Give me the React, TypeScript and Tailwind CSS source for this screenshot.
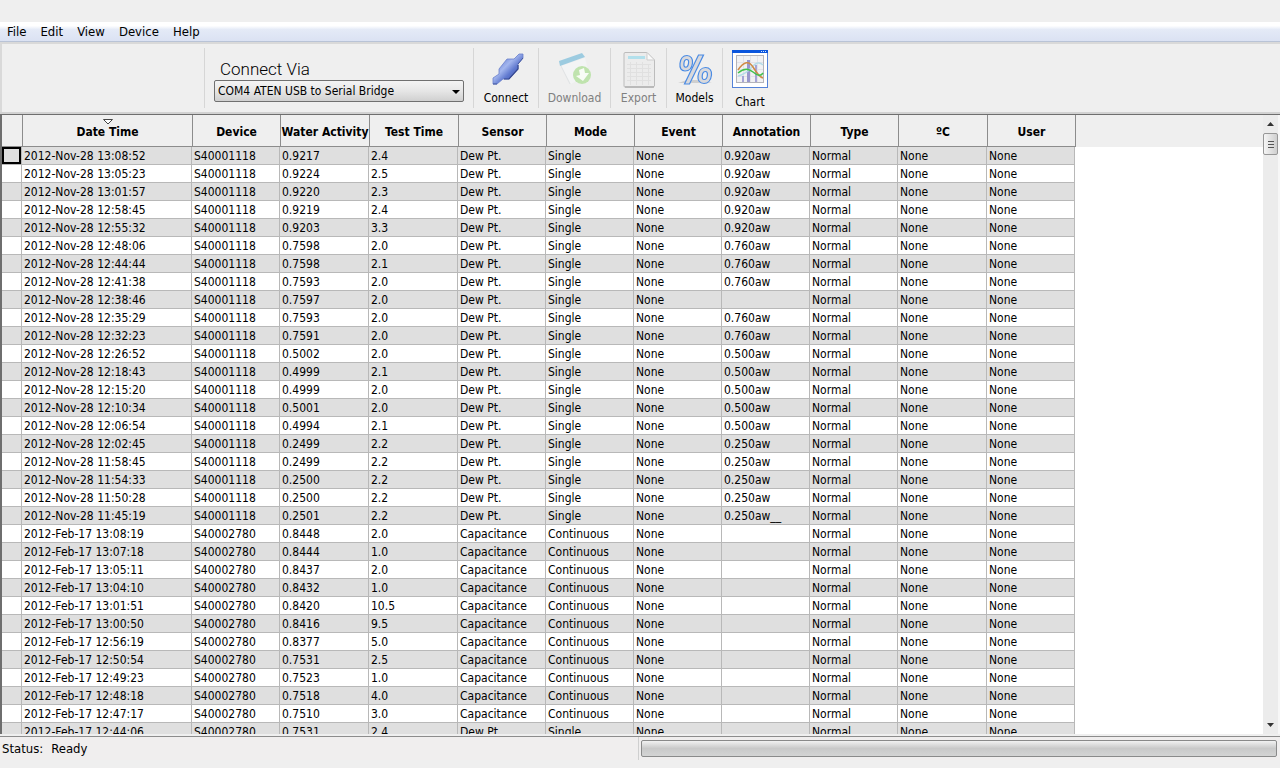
import React, { useState } from "react";

interface Reading {
  time: string;
  device: string;
  activity: string;
  testTime: string;
  sensor: string;
  mode: string;
  annotation: string;
}

const columns = [
  { name: "Date Time", width: "w-[170px]" },
  { name: "Device", width: "w-[88px]" },
  { name: "Water Activity", width: "w-[89px]" },
  { name: "Test Time", width: "w-[89px]" },
  { name: "Sensor", width: "w-[88px]" },
  { name: "Mode", width: "w-[88px]" },
  { name: "Event", width: "w-[88px]" },
  { name: "Annotation", width: "w-[88px]" },
  { name: "Type", width: "w-[88px]" },
  { name: "ºC", width: "w-[89px]" },
  { name: "User", width: "w-[88px]" },
];

const dewPoint = (
  time: string,
  activity: string,
  testTime: string,
  annotation: string
): Reading => ({
  time: "2012-Nov-28 " + time,
  device: "S40001118",
  activity,
  testTime,
  sensor: "Dew Pt.",
  mode: "Single",
  annotation,
});

const capacitance = (
  time: string,
  activity: string,
  testTime: string
): Reading => ({
  time: "2012-Feb-17 " + time,
  device: "S40002780",
  activity,
  testTime,
  sensor: "Capacitance",
  mode: "Continuous",
  annotation: "",
});

const readings: Reading[] = [
  dewPoint("13:08:52", "0.9217", "2.4", "0.920aw"),
  dewPoint("13:05:23", "0.9224", "2.5", "0.920aw"),
  dewPoint("13:01:57", "0.9220", "2.3", "0.920aw"),
  dewPoint("12:58:45", "0.9219", "2.4", "0.920aw"),
  dewPoint("12:55:32", "0.9203", "3.3", "0.920aw"),
  dewPoint("12:48:06", "0.7598", "2.0", "0.760aw"),
  dewPoint("12:44:44", "0.7598", "2.1", "0.760aw"),
  dewPoint("12:41:38", "0.7593", "2.0", "0.760aw"),
  dewPoint("12:38:46", "0.7597", "2.0", ""),
  dewPoint("12:35:29", "0.7593", "2.0", "0.760aw"),
  dewPoint("12:32:23", "0.7591", "2.0", "0.760aw"),
  dewPoint("12:26:52", "0.5002", "2.0", "0.500aw"),
  dewPoint("12:18:43", "0.4999", "2.1", "0.500aw"),
  dewPoint("12:15:20", "0.4999", "2.0", "0.500aw"),
  dewPoint("12:10:34", "0.5001", "2.0", "0.500aw"),
  dewPoint("12:06:54", "0.4994", "2.1", "0.500aw"),
  dewPoint("12:02:45", "0.2499", "2.2", "0.250aw"),
  dewPoint("11:58:45", "0.2499", "2.2", "0.250aw"),
  dewPoint("11:54:33", "0.2500", "2.2", "0.250aw"),
  dewPoint("11:50:28", "0.2500", "2.2", "0.250aw"),
  dewPoint("11:45:19", "0.2501", "2.2", "0.250aw__"),
  capacitance("13:08:19", "0.8448", "2.0"),
  capacitance("13:07:18", "0.8444", "1.0"),
  capacitance("13:05:11", "0.8437", "2.0"),
  capacitance("13:04:10", "0.8432", "1.0"),
  capacitance("13:01:51", "0.8420", "10.5"),
  capacitance("13:00:50", "0.8416", "9.5"),
  capacitance("12:56:19", "0.8377", "5.0"),
  capacitance("12:50:54", "0.7531", "2.5"),
  capacitance("12:49:23", "0.7523", "1.0"),
  capacitance("12:48:18", "0.7518", "4.0"),
  capacitance("12:47:17", "0.7510", "3.0"),
  {
    ...capacitance("12:44:06", "0.7531", "2.4"),
    sensor: "Dew Pt.",
    mode: "Single",
  },
];

const ConnectIcon = () => (
  <svg width="36" height="36" viewBox="0 0 36 36" className="shrink-0">
    <defs>
      <linearGradient id="plug" x1="0" y1="0" x2="1" y2="1">
        <stop offset="0.2" stopColor="#6f86d6" />
        <stop offset="0.42" stopColor="#a3b6ee" />
        <stop offset="0.6" stopColor="#6079cf" />
        <stop offset="1" stopColor="#2c3f92" />
      </linearGradient>
    </defs>
    <path
      d="M35 2 L35 6 L30 12 L30 17 L21 27 L15 27 L9 32 L5 32 L5 26 L11 22 L11 17 L19 7 L26 7 L31 2 Z"
      fill="url(#plug)"
      stroke="#6a80cc"
      strokeWidth="0.800"
    />
    <path d="M30 13 L30 17 L21 27 L16 27" fill="none" stroke="#34468f" strokeWidth="1.200" />
    <path d="M35 6 L30 12 M9 32 L5 32" stroke="#44589f" />
  </svg>
);

const DownloadIcon = () => (
  <svg width="36" height="36" viewBox="0 0 36 36" className="shrink-0">
    <path d="M4 14 L28 6 L32 22 L14 32 Z" fill="#f3f4f5" />
    <path d="M4 14 L13 32" stroke="#dfe2e4" />
    <path d="M2 9 L25 1 L28 5 L3 14 Z" fill="#9ccbe0" />
    <circle cx="25" cy="23" r="9" fill="#bfe3ae" />
    <path
      d="M22 18 L27 16 L28 21 L32 21 L26 29 L19 24 L23 23 Z"
      fill="#f8fcf6"
    />
  </svg>
);

const ExportIcon = () => (
  <svg width="36" height="36" viewBox="0 0 36 36" className="shrink-0">
    <path
      d="M4 0.500 H26 L33.500 8 V34 Q33 35 32 35 H4 Q3 35 3 34 V2 Q3 0.500 4 0.500 Z"
      fill="#ececec"
      stroke="#bcbcbc"
    />
    <path d="M4 35 H33" stroke="#a0a0a0" />
    <path
      d="M6 12.500 H30 M6 16.500 H30 M6 20.500 H30 M6 24.500 H30 M6 28.500 H30 M9.500 10 V33 M15.500 10 V33 M21.500 10 V33 M27.500 12 V33"
      stroke="#e0e0e0"
    />
    <path d="M26 0.500 V8 H33.500 Z" fill="#fafafa" stroke="#cdcdcd" />
    <rect x="7" y="4" width="17" height="3" fill="#b2e0ec" />
  </svg>
);

const ModelsIcon = () => (
  <svg width="36" height="36" viewBox="0 0 36 36" className="shrink-0">
    <path d="M1 31 L10 28 H24 L35 31 Z" fill="#cfcfcf" />
    <g fill="#d9d9dc" stroke="#4a8be4" strokeWidth="1.200">
      <path d="M21.500 3 H26.500 L12.500 32 H7.500 Z" />
      <g fillRule="evenodd">
        <path d="M10 3.500 C14 3.500 16 7 15.500 11 C15 16 12 19 8 19 C4 19 2.500 16 3 11.500 C3.500 7 6 3.500 10 3.500 Z M9.800 7.500 C8 7.500 7 9.500 6.900 12 C6.800 14 7.300 15.200 8.600 15.200 C10.400 15.200 11.400 13 11.600 10.500 C11.700 8.500 11.200 7.500 9.800 7.500 Z" />
        <path d="M28.500 15.500 C33 15.500 35 19 34.500 23 C34 28 31 31.500 27 31.500 C22.500 31.500 20.500 28 21 24 C21.500 19 24.500 15.500 28.500 15.500 Z M28.500 19.500 C26.500 19.500 25.400 21.500 25.200 24 C25.100 26.500 25.700 27.500 27.200 27.500 C29 27.500 30.200 25.500 30.400 23 C30.500 20.800 30 19.500 28.500 19.500 Z" />
      </g>
    </g>
  </svg>
);

const ChartIcon = () => (
  <svg width="36" height="38" viewBox="0 0 36 38" className="shrink-0">
    <rect x="0.500" y="0.500" width="35" height="37" fill="#fff" stroke="#5482d8" />
    <rect x="0" y="0" width="36" height="3" fill="#0a55dd" />
    <path d="M29 1.500 h1 m1 0 h1 m1 0 h1" stroke="#d8e6ff" />
    <rect x="4.500" y="5.500" width="27" height="27" fill="#f1f1f3" stroke="#b4b4ba" />
    <path
      d="M5 12.500 H31 M5 19.500 H31 M5 26.500 H31 M11.500 6 V32 M18.500 6 V32 M25.500 6 V32"
      stroke="#e2e2e8"
    />
    <rect x="10" y="26" width="2" height="6" fill="#a5a4d6" />
    <rect x="15" y="10" width="3" height="22" fill="#9897cd" />
    <rect x="23" y="15" width="2" height="17" fill="#a5a4d6" />
    <path d="M6 26 Q14 24 20 17 T31 15" fill="none" stroke="#b4dce8" strokeWidth="1.500" />
    <path d="M6 20 Q15 7 21 17 T31 28" fill="none" stroke="#cf8a45" strokeWidth="1.500" />
    <path d="M6 23 Q14 16 21 22 T31 23" fill="none" stroke="#41c14c" strokeWidth="1.500" />
  </svg>
);

interface ToolButtonProps {
  label: string;
  width: string;
  disabled?: boolean;
  last?: boolean;
  children: React.ReactNode;
}

const ToolButton: React.FC<ToolButtonProps> = ({
  label,
  width,
  disabled,
  last,
  children,
}) => (
  <button
    disabled={disabled}
    className={`${width} flex shrink-0 flex-col items-center ${
      disabled ? "text-[#808080]" : "text-black"
    } ${last ? "gap-1 pt-0.5" : "border-r border-[#d6d6d6] pt-1"}`}
  >
    {children}
    <span className="leading-5">{label}</span>
  </button>
);

const Toolbar: React.FC = () => {
  const [port, setPort] = useState<string>("COM4 ATEN USB to Serial Bridge");

  return (
    <div className="flex h-[70px] shrink-0 border-t-2 border-l-2 border-[#d9d9d9] bg-[#efefef] pt-1 pb-1">
      <div className="w-[203px] shrink-0 border-r border-[#d6d6d6]" />
      <div className="flex w-[269px] shrink-0 flex-col border-r border-[#d6d6d6] px-[9px] pt-2.5">
        <label
          htmlFor="port"
          className="pl-1.5 font-['Roboto',sans-serif] text-[17px] leading-[22px] font-light"
        >
          Connect Via
        </label>
        <div className="relative">
          <select
            id="port"
            value={port}
            onChange={(e) => setPort(e.target.value)}
            className="block h-[22px] w-full appearance-none rounded-xs border border-[#707070] bg-linear-to-b from-[#f4f4f4] via-[#e6e6e6] to-[#d0d0d0] pl-[3px] text-[12px]"
          >
            <option>COM4 ATEN USB to Serial Bridge</option>
          </select>
          <svg
            width="8"
            height="4"
            viewBox="0 0 8 4"
            className="pointer-events-none absolute top-2.5 right-1"
          >
            <path d="M0 0 H8 L4 4 Z" fill="#000" />
          </svg>
        </div>
      </div>
      <ToolButton label="Connect" width="w-[65px]">
        <ConnectIcon />
      </ToolButton>
      <ToolButton label="Download" width="w-[72px]" disabled>
        <DownloadIcon />
      </ToolButton>
      <ToolButton label="Export" width="w-[56px]" disabled>
        <ExportIcon />
      </ToolButton>
      <ToolButton label="Models" width="w-[56px]">
        <ModelsIcon />
      </ToolButton>
      <ToolButton label="Chart" width="w-[54px]" last>
        <ChartIcon />
      </ToolButton>
    </div>
  );
};

const ReadingsTable: React.FC = () => {
  const [selected, setSelected] = useState<number>(0);

  return (
    <table className="w-full table-fixed border-separate border-spacing-0 text-left">
      <thead>
        <tr className="h-8 bg-[#efefef]">
          <th className="w-5 border-b border-[#8c8c8c]" />
          {columns.map((column, index) => (
            <th
              key={column.name}
              className={`${column.width} relative border-b border-l border-[#8c8c8c] p-0 pt-0.5 text-center font-bold whitespace-nowrap`}
            >
              {index === 0 && (
                <svg
                  width="10"
                  height="6"
                  viewBox="0 0 10 6"
                  className="absolute inset-x-0 top-1 mx-auto"
                >
                  <path d="M0.500 0.500 H9.500 L5 5 Z" fill="#fff" stroke="#444" />
                </svg>
              )}
              {column.name}
            </th>
          ))}
          <th className="border-l border-[#8c8c8c]" />
        </tr>
      </thead>
      <tbody>
        {readings.map((item, index) => {
          const cells = [
            item.time,
            item.device,
            item.activity,
            item.testTime,
            item.sensor,
            item.mode,
            "None",
            item.annotation,
            "Normal",
            "None",
            "None",
          ];
          const shade = index % 2 === 0 ? "bg-[#dfdfdf]" : "bg-white";
          return (
            <tr key={item.time} onClick={() => setSelected(index)}>
              <td className={`${shade} h-[18px] border-r border-b border-[#b8b8b8] p-0`}>
                {selected === index && (
                  <div className="h-[17px] border-2 border-black" />
                )}
              </td>
              {cells.map((cell, i) => (
                <td
                  key={i}
                  className={`${shade} h-[18px] border-r border-b border-[#b8b8b8] p-0 pt-0.5 pl-0.5 leading-[15px] whitespace-nowrap`}
                >
                  {cell}
                </td>
              ))}
              <td className="p-0" />
            </tr>
          );
        })}
      </tbody>
    </table>
  );
};

const ScrollBar = () => (
  <div className="flex w-[15px] shrink-0 flex-col items-center bg-[#ececec]">
    <button aria-label="Scroll up" className="flex h-[18px] w-full items-center justify-center">
      <svg width="7" height="4" viewBox="0 0 7 4">
        <path d="M0 4 H7 L3.500 0 Z" fill="#333" />
      </svg>
    </button>
    <div className="flex h-[22px] w-full flex-col items-center justify-center gap-0.5 rounded-xs border border-[#979797] bg-linear-to-r from-[#f5f5f5] to-[#cfcfcf]">
      <span className="h-px w-1.5 bg-[#555]" />
      <span className="h-px w-1.5 bg-[#555]" />
      <span className="h-px w-1.5 bg-[#555]" />
    </div>
    <button
      aria-label="Scroll down"
      className="mt-auto flex h-[18px] w-full items-center justify-center"
    >
      <svg width="7" height="4" viewBox="0 0 7 4">
        <path d="M0 0 H7 L3.500 4 Z" fill="#333" />
      </svg>
    </button>
  </div>
);

export const App: React.FC = () => {
  return (
    <div className="flex h-screen flex-col overflow-hidden bg-[#efefef] pt-[22px] pb-2 font-['DejaVu_Sans_Condensed','DejaVu_Sans',sans-serif] text-[12px] text-black">
      <nav className="flex h-5 shrink-0 items-center gap-3.5 border-b border-[#b9c3d6] bg-linear-to-b from-white from-20% via-[#e4eaf7] via-40% to-[#dbe2f3] pl-[7px] text-[13px]">
        {["File", "Edit", "View", "Device", "Help"].map((item) => (
          <button key={item}>{item}</button>
        ))}
      </nav>
      <Toolbar />
      <div className="h-0.5 shrink-0 bg-[#d2d2d2]" />
      <main className="flex min-h-0 flex-1 border-t border-l-2 border-[#6e6e6e] bg-white">
        <div className="min-w-0 flex-1 overflow-hidden">
          <ReadingsTable />
        </div>
        <ScrollBar />
        <div className="w-0.5 bg-[#f7f7f7]" />
      </main>
      <footer className="mt-0.5 flex h-6 shrink-0 border-t border-[#8c8c8c] bg-[#f0eeee]">
        <div className="flex flex-1 items-center gap-2 pl-0.5 text-[13px]">
          <span>Status:</span>
          <span>Ready</span>
        </div>
        <div className="flex-1 border-l border-[#cfcfcf] py-[3px] pr-[3px] pl-0.5">
          <div className="h-[17px] rounded-xs border border-[#8a8a8a] bg-linear-to-b from-[#f2f2f2] via-[#c9c9c9] to-[#d4d4d4]" />
        </div>
      </footer>
    </div>
  );
};

export default App;
